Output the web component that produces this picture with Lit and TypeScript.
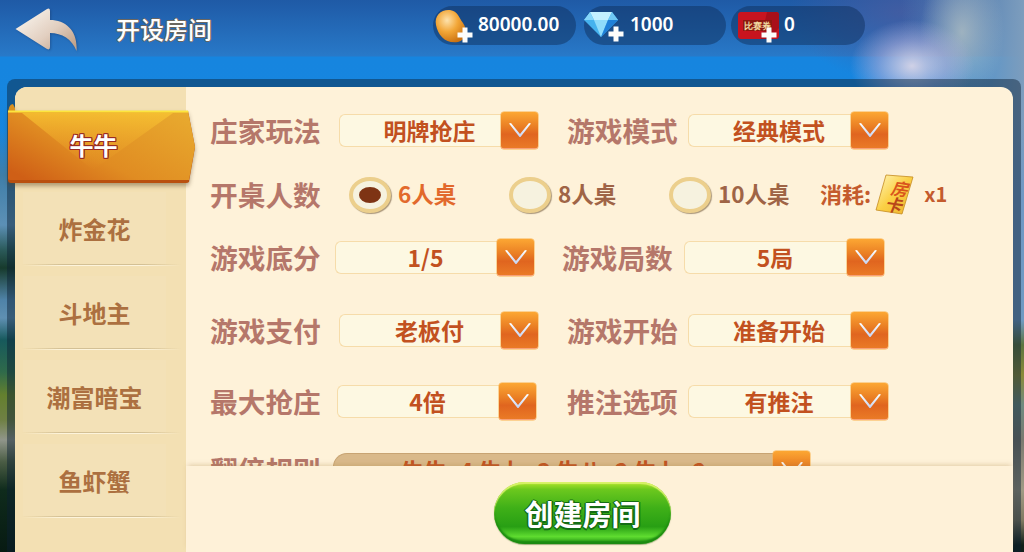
import { LitElement, html, css, svg } from "lit";
import { customElement } from "lit/decorators.js";

const chevron = html`<svg class="chev" viewBox="0 0 22 14" width="22" height="14">
  <defs>
    <linearGradient id="chevFill" x1="0" y1="0" x2="0" y2="1">
      <stop offset="0" stop-color="#ffffff" />
      <stop offset="1" stop-color="#c4d2f2" />
    </linearGradient>
  </defs>
  <path d="M0 0.5 L2 0 L11 11 L20 0 L22 0.5 L11.5 14 L10.5 14 Z" fill="url(#chevFill)" />
</svg>`;

const plus = (x: number, y: number) => svg`
  <path d="M${x - 2.5} ${y - 7.5} h5 v5 h5 v5 h-5 v5 h-5 v-5 h-5 v-5 h5 Z" fill="#fdfdfb" />
`;

@customElement("app-root")
export class AppRoot extends LitElement {
  static styles = css`
    :host {
      display: block;
      width: 1024px;
      height: 552px;
      overflow: hidden;
      font-family: "Noto Sans CJK SC", "Noto Sans", sans-serif;
      background:
        linear-gradient(180deg, transparent 130px, #3f7ea8 175px, #5c90b6 225px, #2b5a5a 250px, #173a2c 268px, #4f83a8 300px, #5f90b2 318px, #17595c 340px, #2f6a4a 372px, #64802e 395px, #6f8044 420px, #90958a 440px, #4a5c44 462px, #0f2b1c 490px, #071a12 552px) left top / 16px 100% no-repeat,
        linear-gradient(180deg, transparent 120px, #6f98c4 200px, #6f9ac2 320px, #5c7440 345px, #8a8a3a 375px, #6e8a80 405px, #7a7a70 440px, #a09a84 490px, #807a62 520px, #10201a 545px) right top / 11px 100% no-repeat,
        radial-gradient(ellipse 62px 46px at 912px 66px, rgba(222, 216, 232, 0.92), rgba(190, 182, 222, 0.5) 55%, rgba(150, 160, 215, 0) 100%),
        radial-gradient(ellipse 42px 70px at 962px 32px, rgba(176, 190, 194, 0.8), rgba(176, 190, 194, 0) 100%),
        linear-gradient(90deg, rgba(100, 140, 190, 0) 0, rgba(100, 140, 190, 0) 88%, #7d9dbd 100%),
        radial-gradient(ellipse 110px 70px at 900px 12px, rgba(72, 92, 160, 0.8), rgba(72, 92, 160, 0) 100%),
        linear-gradient(180deg, #1f5aa6 0, #2879c8 56px, #1685df 57px, #1a88de 100%);
    }

    .top {
      display: flex;
      align-items: flex-start;
      height: 56px;
    }
    .back {
      margin: 8px 0 0 15px;
      filter: drop-shadow(1px 1px 1px rgba(20, 40, 80, 0.35));
    }
    .title {
      width: 96px;
      margin: 11px 0 0 37px;
      font-size: 24px;
      font-weight: 500;
      line-height: 36px;
      color: #fff;
      text-shadow: -1px 0 #6b6660, 1px 0 #6b6660, 0 -1px #6b6660, 0 1px #6b6660;
    }
    .pills {
      display: flex;
      margin: 6px 0 0 221px;
    }
    .pill {
      display: flex;
      align-items: center;
      height: 39px;
      border-radius: 20px;
      background: rgba(15, 45, 90, 0.48);
      font-family: "Noto Sans", sans-serif;
      font-size: 19px;
      font-weight: 600;
      color: #fff;
    }
    .pill svg {
      flex: none;
      overflow: visible;
    }
    .num { margin-bottom: 4px; }
    .p1 { width: 143px; }
    .p2 { width: 142px; margin-left: 8px; }
    .p3 { width: 134px; margin-left: 5px; }

    .frame {
      margin: 23px 3px 0 7px;
      padding: 8px 8px 0;
      height: 473px;
      box-sizing: border-box;
      border-radius: 8px 8px 0 0;
      background: rgba(10, 30, 50, 0.45);
    }
    .panel {
      display: flex;
      height: 465px;
      border-radius: 12px 12px 0 0;
      background: #fef2d9;
    }

    .side {
      flex: none;
      width: 171px;
      padding-top: 23px;
      box-sizing: border-box;
      border-radius: 12px 0 0 0;
      background: #f3e0b3;
    }
    .tab {
      position: relative;
      display: flex;
      align-items: center;
      justify-content: center;
      width: 187px;
      height: 74px;
      margin: 0 0 -2px -7px;
      padding: 0 16px 5px 0;
      box-sizing: border-box;
      font-size: 24px;
      font-weight: 700;
      color: #fff;
      text-shadow: -1px 0 #9a2a22, 1px 0 #9a2a22, 0 -1px #9a2a22, 0 1px #9a2a22, -1px -1px #9a2a22, 1px 1px #9a2a22, 1px -1px #9a2a22, -1px 1px #9a2a22;
      z-index: 1;
    }
    .tab svg {
      position: absolute;
      left: 0;
      top: 0;
      overflow: visible;
      filter: drop-shadow(0 3px 2px rgba(90, 70, 40, 0.45));
    }
    .tab span {
      position: relative;
    }
    .item {
      display: flex;
      flex-direction: column;
      height: 84px;
      padding-top: 10px;
      box-sizing: border-box;
      font-size: 24px;
      font-weight: 700;
      color: #ac7040;
    }
    .item span {
      flex: 1;
      display: flex;
      align-items: center;
      justify-content: center;
      margin: 0 20px 0 8px;
      background: #f3e1b7;
      white-space: nowrap;
    }
    .rule {
      flex: none;
      height: 2px;
      margin: 0 5px 0 7px;
      background:
        linear-gradient(90deg, transparent, #d3c095 25%, #d3c095 75%, transparent) top / 100% 1px no-repeat,
        linear-gradient(90deg, transparent, #fdf4dc 25%, #fdf4dc 75%, transparent) bottom / 100% 1px no-repeat;
    }

    .main {
      flex: 1;
      min-width: 0;
      display: flex;
      flex-direction: column;
    }
    .form {
      height: 379px;
      flex: none;
      overflow: hidden;
      padding: 25px 0 0 24px;
      box-sizing: border-box;
    }
    .row {
      display: flex;
      align-items: center;
      height: 37px;
    }
    .r2 { margin-top: 27px; }
    .r3 { margin-top: 26px; }
    .r4 { margin-top: 36px; }
    .r5 { margin-top: 34px; }
    .r6 { margin-top: 31px; }
    .label {
      flex: none;
      width: 111px;
      padding-bottom: 1px;
      font-size: 27.7px;
      font-weight: 700;
      white-space: nowrap;
      color: #b5776a;
    }
    .select {
      flex: none;
      display: flex;
      align-items: center;
      width: 199px;
      height: 37px;
      margin-left: 18px;
    }
    .field {
      flex: 1;
      display: flex;
      align-items: center;
      justify-content: center;
      height: 33px;
      padding: 0 0 2px 18px;
      box-sizing: border-box;
      border: 1px solid #f6dcaa;
      border-right: none;
      border-radius: 6px 0 0 6px;
      background: #fdf8e2;
      font-size: 23px;
      font-weight: 700;
      color: #c2511f;
      white-space: nowrap;
      overflow: hidden;
    }
    .btn {
      flex: none;
      display: flex;
      align-items: center;
      justify-content: center;
      width: 37px;
      height: 37px;
      box-sizing: border-box;
      border-radius: 3px;
      border-bottom: 1px solid #f8a078;
      background: linear-gradient(180deg, #fca733 0, #ea7f24 40%, #e0651f 62%, #ea7a26 100%);
      box-shadow: 0 0 0 0.5px #f9b04a;
    }
    .select.second { width: 200px; margin-left: 10px; }
    .label.l2 { margin-left: 29px; }
    .r3 .first { margin-left: 14px; }
    .r3 .l2 { margin-left: 28px; }
    .r3 .select.second { margin-left: 11px; }
    .r5 .first { margin-left: 16px; }
    .r5 .l2 { margin-left: 31px; }
    .r6 .select {
      width: 477px;
      margin-left: 12px;
    }
    .r6 .field {
      padding: 0;
      border-radius: 14px 0 0 14px;
      background: #d9b98a;
      border-color: #c8a473;
    }

    .radios {
      display: grid;
      grid-template-columns: 160px 160px 153px;
      margin-left: 28px;
      flex: none;
    }
    .opt {
      display: flex;
      align-items: center;
      font-size: 22.5px;
      font-weight: 700;
      color: #9f6446;
    }
    .opt.on { color: #e2692c; }
    .lift { margin-bottom: 3px; }
    .radio {
      display: flex;
      align-items: center;
      justify-content: center;
      width: 42px;
      height: 36px;
      margin-right: 7px;
      box-sizing: border-box;
      border-radius: 50%;
      border: 4px solid #eccf8c;
      background: #f6f2df;
      box-shadow: 1px 1px 1px #a9967a;
    }
    .dot {
      width: 22px;
      height: 16px;
      border-radius: 50%;
      background: #7e3414;
    }
    .cost {
      display: flex;
      align-items: center;
      margin-left: -2px;
      font-size: 22px;
      font-weight: 700;
      color: #c45b2d;
      white-space: nowrap;
    }
    .cost svg {
      flex: none;
      margin: 0 9px 0 4px;
      overflow: visible;
    }
    .times { font-size: 20px; }

    .foot {
      flex: 1;
      padding: 16px 34px 0 0;
      display: flex;
      justify-content: center;
      align-items: flex-start;
      background: #fef1d8;
      box-shadow: 0 -3px 5px -2px rgba(170, 130, 70, 0.35);
      position: relative;
    }
    .create {
      width: 177px;
      height: 62px;
      display: flex;
      align-items: center;
      justify-content: center;
      border-radius: 31px;
      background: linear-gradient(180deg, #b4e62c 0, #6cc81e 12%, #3fb018 42%, #289f14 72%, #5fdc30 88%, #1f8f12 100%);
      box-shadow: inset 0 2px 1px #d9f26a, inset 0 -3px 2px #1b8a10, 0 1px 1px rgba(60, 110, 30, 0.5);
      font-size: 29px;
      font-weight: 700;
      color: #fff;
      text-shadow: -1.5px 0 #146c14, 1.5px 0 #146c14, 0 -1.5px #146c14, 0 1.5px #146c14;
    }
  `;

  private select(text: string, cls = "") {
    return html`<div class="select ${cls}">
      <div class="field">${text}</div>
      <div class="btn">${chevron}</div>
    </div>`;
  }

  private radio(text: string, on = false) {
    return html`<div class="opt ${on ? "on" : ""}">
      <div class="radio">${on ? html`<div class="dot"></div>` : ""}</div>
      <span class="lift">${text}</span>
    </div>`;
  }

  private renderTop() {
    return html`<div class="top">
      <svg class="back" width="64" height="44" viewBox="16 8 64 44">
        <defs>
          <linearGradient id="backFill" x1="0.1" y1="0.2" x2="0.9" y2="0.9">
            <stop offset="0" stop-color="#f6f0e8" />
            <stop offset="0.55" stop-color="#e2cfc0" />
            <stop offset="1" stop-color="#c2a48c" />
          </linearGradient>
        </defs>
        <path
          d="M16.5 29 L48 9 Q51 7.500 51 11 L51 20 C67 20 79 31 77.500 51 C73 39 63 33 51 33 L51 47 Q51 50.500 48 49 Z"
          fill="url(#backFill)"
        />
      </svg>
      <div class="title">开设房间</div>
      <div class="pills">
        <div class="pill p1">
          <svg width="45" height="39" viewBox="0 0 45 39">
            <defs>
              <radialGradient id="coin" cx="0.38" cy="0.32" r="0.72">
                <stop offset="0" stop-color="#fde2ac" />
                <stop offset="0.5" stop-color="#f2a637" />
                <stop offset="1" stop-color="#cb7212" />
              </radialGradient>
            </defs>
            <path d="M3 19 C1 9 9 3 17 4 C25 5 26 12 30 17 C35 24 33 34 25 36 C13 38 5 30 3 19Z" fill="url(#coin)" />
            ${plus(32, 29)}
          </svg>
          <span class="num">80000.00</span>
        </div>
        <div class="pill p2">
          <svg width="46" height="39" viewBox="0 0 46 39">
            <path d="M6 6 H28 L34 14 L17 31 L0 14 Z" fill="#45b2ee" />
            <path d="M6 6 H28 L24 14 H10 Z" fill="#c4f0ff" />
            <path d="M6 6 L10 14 H0 Z" fill="#86d6fa" />
            <path d="M28 6 L34 14 H24 Z" fill="#6fc8f5" />
            <path d="M10 14 H24 L17 31 Z" fill="#8fdcfb" />
            <path d="M24 14 H34 L17 31 Z" fill="#1f80d8" />
            ${plus(32, 28)}
          </svg>
          <span class="num">1000</span>
        </div>
        <div class="pill p3">
          <svg width="53" height="39" viewBox="0 0 53 39">
            <rect x="7" y="6" width="41" height="27" rx="3" fill="#c8141f" />
            <path d="M36 6 H45 Q48 6 48 9 V22 L38 33 H30 Z" fill="#a80f1a" />
            <rect x="12" y="14" width="29" height="11" fill="#8c1810" />
            <text x="26.500" y="23" font-size="8.500" font-weight="700" text-anchor="middle" fill="#f3dfa4">比赛券</text>
            ${plus(38, 29)}
          </svg>
          <span class="num">0</span>
        </div>
      </div>
    </div>`;
  }

  private renderSide() {
    return html`<div class="side">
      <div class="tab">
        <svg width="187" height="74" viewBox="0 0 187 74">
          <defs>
            <linearGradient id="tabBase" x1="0" y1="0.85" x2="1" y2="0.15">
              <stop offset="0" stop-color="#cf5f16" />
              <stop offset="0.4" stop-color="#e08c22" />
              <stop offset="1" stop-color="#e8a92e" />
            </linearGradient>
            <linearGradient id="tabFold" x1="0" y1="0" x2="0" y2="1">
              <stop offset="0" stop-color="#f8c432" stop-opacity="0.8" />
              <stop offset="1" stop-color="#eda02a" stop-opacity="0" />
            </linearGradient>
          </defs>
          <path d="M0 6 Q0 -6 5 -6 L7 -2 V6 Z" fill="#d99020" />
          <path d="M0 1 H180 L187 37 L181 72 Q180 73 178 73 H3 Q0 73 0 70 Z" fill="#b9500f" />
          <path d="M0 1 H180 L187 37 L181 70 H2 Q0 70 0 68 Z" fill="url(#tabBase)" />
          <path d="M14 3 H165 L85 60 Z" fill="url(#tabFold)" />
          <path d="M0 0.500 H180 L180.500 2.500 H0 Z" fill="#fde53e" />
        </svg>
        <span>牛牛</span>
      </div>
      ${["炸金花", "斗地主", "潮富暗宝", "鱼虾蟹"].map(
        (name) => html`<div class="item"><span>${name}</span><div class="rule"></div></div>`
      )}
    </div>`;
  }

  render() {
    return html`
      ${this.renderTop()}
      <div class="frame">
        <div class="panel">
          ${this.renderSide()}
          <div class="main">
            <div class="form">
              <div class="row r1">
                <div class="label">庄家玩法</div>
                ${this.select("明牌抢庄", "first")}
                <div class="label l2">游戏模式</div>
                ${this.select("经典模式", "second")}
              </div>
              <div class="row r2">
                <div class="label">开桌人数</div>
                <div class="radios">
                  ${this.radio("6人桌", true)} ${this.radio("8人桌")} ${this.radio("10人桌")}
                </div>
                <div class="cost">
                  <span class="lift">消耗:</span>
                  <svg width="40" height="41" viewBox="877 177 40 41">
                    <defs>
                      <linearGradient id="card" x1="0" y1="0" x2="1" y2="1">
                        <stop offset="0" stop-color="#fff6bc" />
                        <stop offset="0.5" stop-color="#fbd045" />
                        <stop offset="1" stop-color="#eeb02a" />
                      </linearGradient>
                    </defs>
                    <path d="M888 178 L915 180 L904 217 L878 213 Z" fill="url(#card)" stroke="#c48a20" stroke-width="0.8" stroke-linejoin="round" />
                    <text x="0" y="0" transform="translate(892 197) rotate(8) skewX(-14)" font-size="17" font-weight="700" fill="#d9541c">房</text>
                    <text x="0" y="0" transform="translate(886 213) rotate(8) skewX(-14)" font-size="17" font-weight="700" fill="#b8461a">卡</text>
                  </svg>
                  <span class="lift times">x1</span>
                </div>
              </div>
              <div class="row r3">
                <div class="label">游戏底分</div>
                ${this.select("1/5", "first")}
                <div class="label l2">游戏局数</div>
                ${this.select("5局", "second")}
              </div>
              <div class="row r4">
                <div class="label">游戏支付</div>
                ${this.select("老板付", "first")}
                <div class="label l2">游戏开始</div>
                ${this.select("准备开始", "second")}
              </div>
              <div class="row r5">
                <div class="label">最大抢庄</div>
                ${this.select("4倍", "first")}
                <div class="label l2">推注选项</div>
                ${this.select("有推注", "second")}
              </div>
              <div class="row r6">
                <div class="label">翻倍规则</div>
                ${this.select("牛牛x4 牛九x3 牛八x2 牛七x2")}
              </div>
            </div>
            <div class="foot">
              <div class="create">创建房间</div>
            </div>
          </div>
        </div>
      </div>
    `;
  }
}
